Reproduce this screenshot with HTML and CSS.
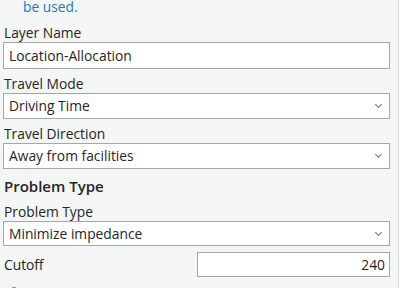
FILE: index.html
```html
<!DOCTYPE html>
<html lang="en">
<head>
    <meta charset="UTF-8">
    <title>Location-Allocation</title>
    <link rel="stylesheet" href="styles.css">
</head>
<body>
    <div class="pane">
        <p class="note">be used.</p>

        <label class="label">Layer Name</label>
        <div class="box">Location-Allocation</div>

        <label class="label">Travel Mode</label>
        <div class="box select">Driving Time <span class="chev"></span></div>

        <label class="label">Travel Direction</label>
        <div class="box select">Away from facilities <span class="chev"></span></div>

        <h3 class="heading">Problem Type</h3>

        <label class="label">Problem Type</label>
        <div class="box select short">Minimize impedance <span class="chev"></span></div>

        <div class="row">
            <label class="row-label">Cutoff</label>
            <div class="box number">240</div>
        </div>

        <div class="more"></div>
    </div>
</body>
</html>
```

FILE: styles.css
```css
body {
    margin: 0;
    font-family: "Open Sans", "Noto Sans", sans-serif;
    font-size: 13.8px;
    color: #262626;
    background: #ffffff;
}

.pane {
    width: 387px;
    height: 288px;
    padding: 0 8px 0 3px;
    background: #f4f5f5;
    border-right: 1px solid #d6d6d6;
    overflow: hidden;
}

.note {
    margin: 0 0 0 20px;
    height: 24px;
    line-height: 14px;
    color: #1b7ac4;
}

.label {
    display: block;
    height: 18px;
    line-height: 18px;
    margin-top: 6px;
    padding-left: 1px;
}

.note + .label {
    margin-top: 0;
}

.box {
    position: relative;
    height: 25px;
    line-height: 26px;
    padding-left: 5px;
    background: #ffffff;
    border: 1px solid #a6a6a6;
}

.select {
    height: 24px;
    line-height: 24px;
}

.short {
    height: 23px;
    line-height: 23px;
}

.chev {
    position: absolute;
    right: 8px;
    top: 8px;
    width: 4px;
    height: 4px;
    border-right: 1.5px solid #7a7a7a;
    border-bottom: 1.5px solid #7a7a7a;
    transform: rotate(45deg);
}

.heading {
    margin: 7px 0 0 1px;
    height: 20px;
    line-height: 20px;
    font-size: 15px;
    font-weight: 600;
}

.heading + .label {
    margin-top: 7px;
}

.row {
    display: flex;
    align-items: center;
    margin-top: 6px;
}

.row-label {
    flex: 0 0 193px;
    padding-left: 1px;
    line-height: 25px;
}

.number {
    flex: 1;
    height: 23px;
    line-height: 24px;
    text-align: right;
    padding-right: 4px;
}

.more {
    margin: 10px 0 0 6px;
    width: 8px;
    height: 8px;
    border-radius: 50%;
    border: 1.5px solid #3b8fd6;
}
```
